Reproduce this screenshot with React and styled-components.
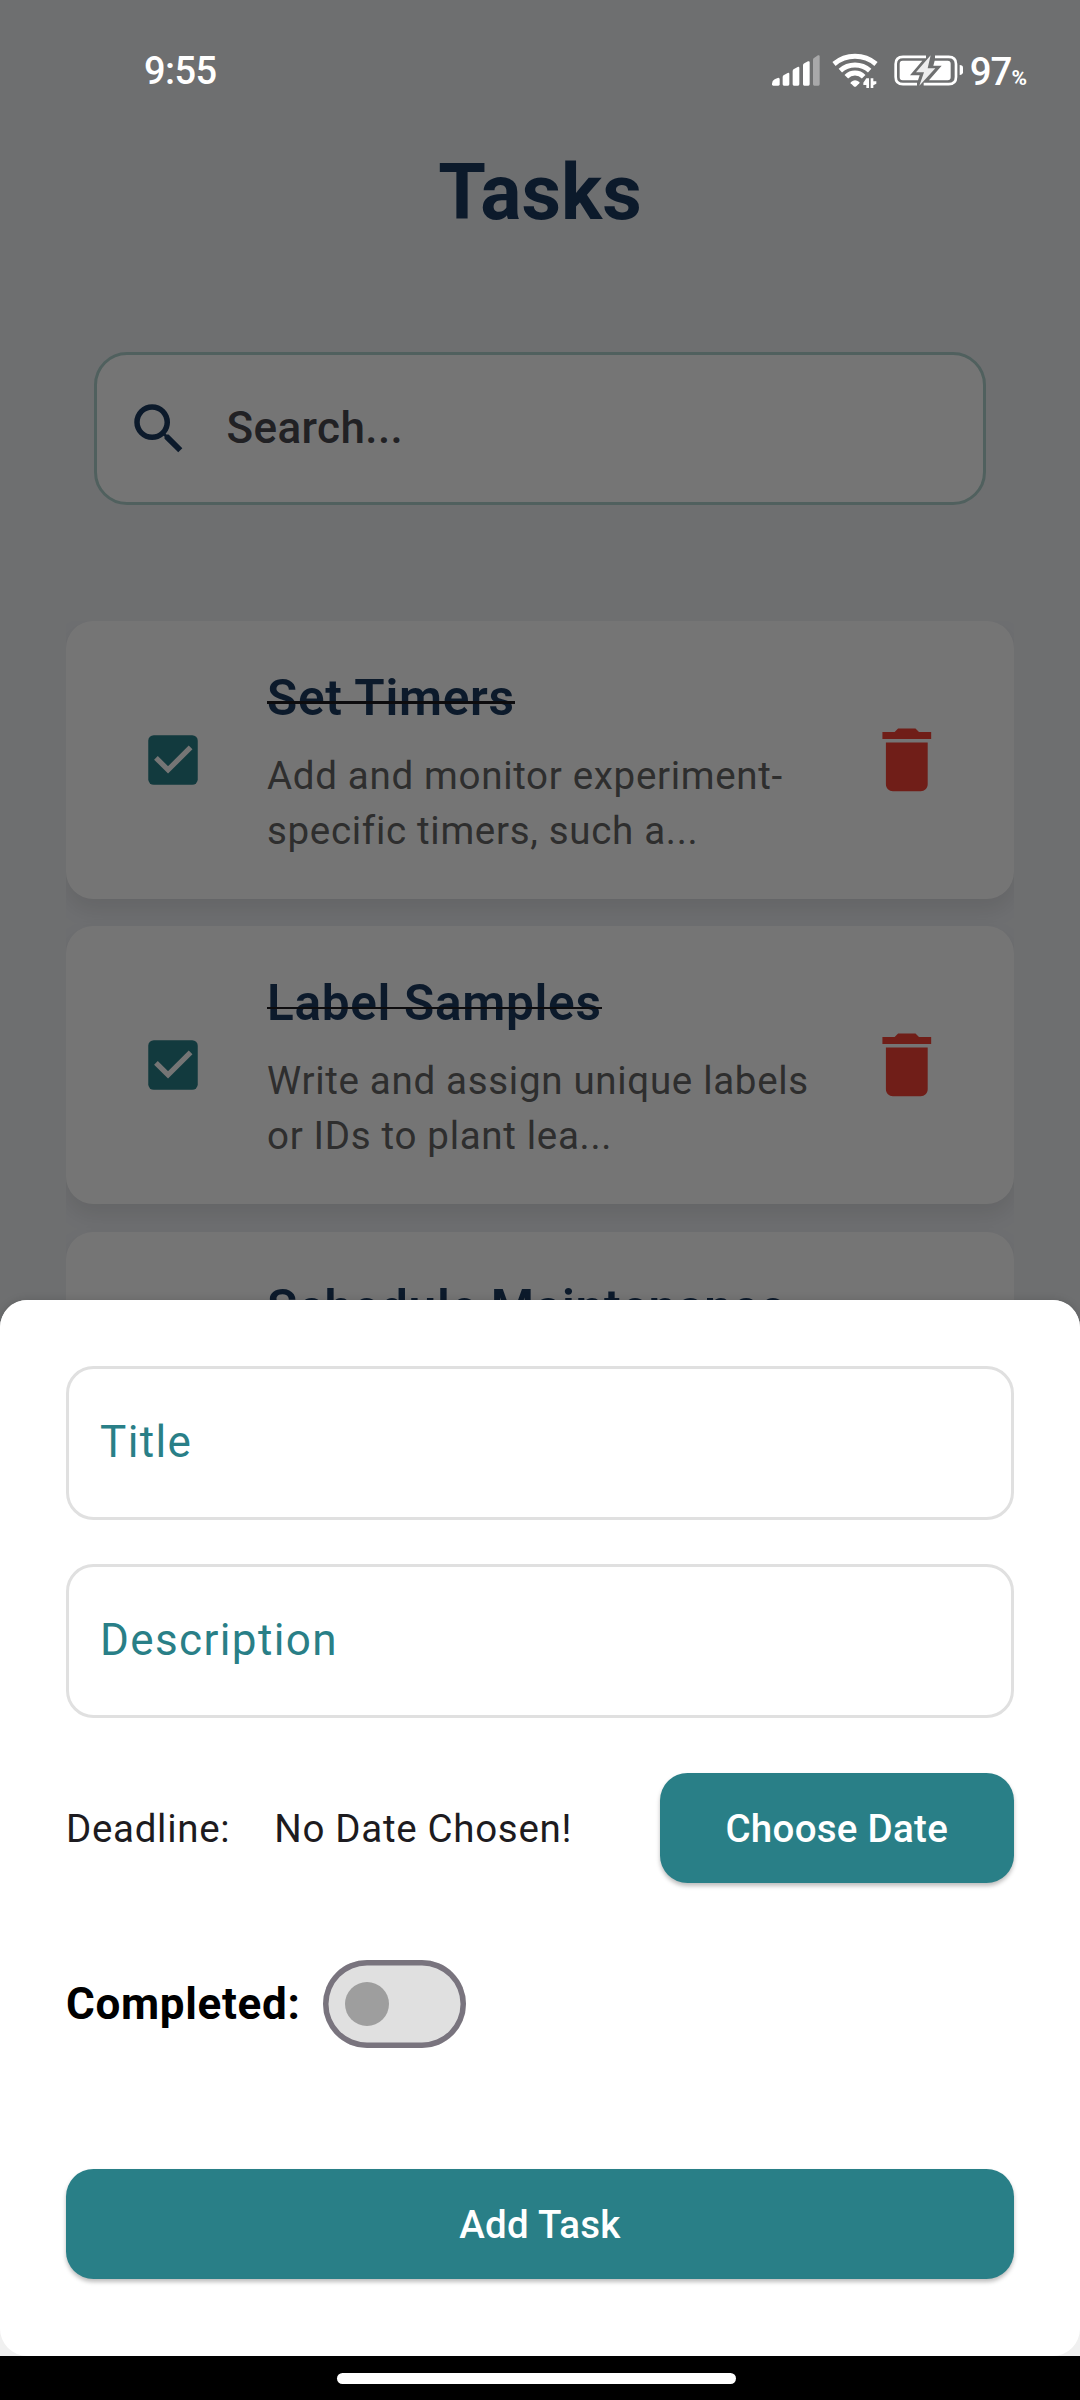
import React from "react";
import styled, { createGlobalStyle } from "styled-components";

const Global = createGlobalStyle`
  *, *::before, *::after { box-sizing: border-box; }
  body { margin: 0; background: #000; font-family: Roboto, "Noto Sans", sans-serif; }
  button, input { font: inherit; }
`;

const Screen = styled.div`
  position: relative;
  width: 1080px;
  height: 2400px;
  overflow: hidden;
  background: #eff1f5;
`;

const Page = styled.main`
  display: flex;
  flex-direction: column;
  height: 2356px;
  padding: 142.5px 66px 0;
  overflow: hidden;
`;

const Heading = styled.h1`
  margin: 0;
  height: 100px;
  line-height: 100px;
  font-size: 77px;
  font-weight: 700;
  text-align: center;
  color: #1b3a5f;
`;

const SearchBox = styled.div`
  display: flex;
  align-items: center;
  gap: 34px;
  height: 153px;
  margin: 109.5px 28px 0;
  padding-left: 29.4px;
  border: 3px solid #aed1cc;
  border-radius: 33px;
  background: #fff;
  color: #1b3a5f;
`;

const Placeholder = styled.span`
  padding-bottom: 2px;
  font-size: 44px;
  font-weight: 500;
  line-height: 66px;
  letter-spacing: 0.41px;
  color: #49484f;
`;

const TaskList = styled.ul`
  display: flex;
  flex-direction: column;
  gap: 27.5px;
  height: 1735px;
  margin: 116px 0 0;
  padding: 0;
  list-style: none;
  overflow: hidden;
`;

const Card = styled.li`
  display: flex;
  align-items: center;
  flex: none;
  height: 277.75px;
  padding: 0 65px 0 74px;
  border-radius: 27.5px;
  background: #fff;
  box-shadow: 0 11px 22px rgba(0, 0, 0, 0.09);
`;

const CardBody = styled.div`
  flex: 1;
  margin-left: 61px;
  padding-top: 6px;
`;

const CardTitle = styled.h2`
  position: relative;
  width: max-content;
  margin: 0 0 20px;
  font-size: 49.5px;
  font-weight: 600;
  line-height: 60px;
  letter-spacing: 0.69px;
  color: #1b3a5f;
  white-space: nowrap;

  &::after {
    content: "";
    position: absolute;
    inset: 33.5px 0 auto;
    height: 2.5px;
    background: #1d1b20;
  }
`;

const CardText = styled.p`
  margin: 0;
  font-size: 38.5px;
  line-height: 55px;
  letter-spacing: 0.69px;
  color: #646464;
  white-space: pre-line;
`;

const Scrim = styled.div`
  position: absolute;
  inset: 0 0 44px;
  background: rgba(0, 0, 0, 0.54);
`;

const StatusBar = styled.header`
  position: absolute;
  inset: 0 0 auto;
  display: flex;
  align-items: flex-start;
  justify-content: space-between;
  padding: 49px 53px 0 144px;
  color: #fff;
`;

const Clock = styled.time`
  font-size: 38px;
  font-weight: 500;
  line-height: 45px;
  letter-spacing: -0.6px;
`;

const StatusIcons = styled.div`
  display: flex;
  align-items: flex-start;
`;

const Glyph = styled.svg`
  display: block;
  flex: none;
  margin-top: ${(p) => p.$drop || 0}px;
  margin-right: ${(p) => p.$gap || 0}px;
  fill: currentColor;
`;

const Battery = styled.span`
  display: flex;
  align-items: baseline;
  font-size: 38.5px;
  font-weight: 500;
  line-height: 45px;
  letter-spacing: -1px;
`;

const Percent = styled.span`
  font-size: 21px;
  font-weight: 700;
  letter-spacing: 0;
`;

const Sheet = styled.section`
  position: absolute;
  inset: 1300px 0 44px;
  background: #f0f0f0;
  border-radius: 27.5px 27.5px 0 0;
  box-shadow: 0 0 8px rgba(0, 0, 0, 0.15);
`;

const Form = styled.form`
  display: flex;
  flex-direction: column;
  height: 1056px;
  padding: 66px 66px 77px;
  border-radius: 27.5px;
  background: #fff;
`;

const Field = styled.label`
  display: flex;
  align-items: center;
  height: 154px;
  margin-bottom: 44px;
  padding: 0 0 3px 31px;
  border: 3px solid #e0e0e0;
  border-radius: 27.5px;
  font-size: 44px;
  letter-spacing: 1.375px;
  color: #297f87;
`;

const DateRow = styled.div`
  display: flex;
  align-items: center;
  height: 110px;
  margin-top: 11px;
  font-size: 38.5px;
  letter-spacing: 0.69px;
  color: #1d1b20;
`;

const DateValue = styled.span`
  flex: 1;
  margin-left: 44px;
`;

const Button = styled.button`
  display: flex;
  align-items: center;
  justify-content: center;
  width: ${(p) => (p.$wide ? "100%" : "354.5px")};
  height: 110px;
  padding: 0;
  border: 0;
  border-radius: 27.5px;
  background: #297f87;
  box-shadow: 0 3px 4px rgba(0, 0, 0, 0.26);
  font-size: 38.5px;
  font-weight: 500;
  letter-spacing: 0.275px;
  color: #fff;
`;

const SwitchRow = styled.div`
  display: flex;
  align-items: center;
  gap: 22px;
  height: 132px;
  margin: 55px 0 99px;
  font-size: 44px;
  font-weight: 700;
  letter-spacing: 0.69px;
  color: #000;
`;

const Track = styled.span`
  display: flex;
  align-items: center;
  width: 143px;
  height: 88px;
  padding-left: 22px;
  border-radius: 44px;
  background: #e0e0e0;
  box-shadow: inset 0 0 0 5.5px #79747e;
`;

const Thumb = styled.span`
  width: 44px;
  height: 44px;
  border-radius: 50%;
  background: #9e9e9e;
`;

const NavBar = styled.footer`
  display: flex;
  justify-content: center;
  height: 44px;
  padding: 17px 7px 0 0;
  background: #000;
`;

const Handle = styled.span`
  width: 399px;
  height: 11px;
  border-radius: 6px;
  background: #fff;
`;

const tasks = [
  { title: "Set Timers", text: "Add and monitor experiment-\nspecific timers, such a..." },
  { title: "Label Samples", text: "Write and assign unique labels\nor IDs to plant lea..." },
  { title: "Schedule Maintenance", text: "Plan regular upkeep for\nlab equipment..." },
];

const SignalIcon = () => (
  <Glyph width="50" height="32" viewBox="0 0 150 96" $gap={11.7} $drop={5}>
    <path d="M3 89q0-9 8-13l9-4q6-2 6 4v15q0 4-4 4H7q-4 0-4-4z" />
    <path d="M35 69q0-4 4-6l11-6q5-2 5 3v31q0 4-4 4H39q-4 0-4-4z" />
    <path d="M65 51q0-4 4-6l11-6q5-2 5 3v49q0 4-4 4H69q-4 0-4-4z" />
    <path d="M96 34q0-4 4-6l11-6q5-2 5 3v66q0 4-4 4h-12q-4 0-4-4z" />
    <path opacity="0.4" d="M126 17q0-4 4-6l11-7q5-2 5 3v84q0 4-4 4h-12q-4 0-4-4z" />
  </Glyph>
);

const WifiIcon = () => (
  <Glyph width="47" height="37" viewBox="0 0 141 111" $gap={13.1} $drop={4.3}>
    <g fill="none" stroke="currentColor" strokeWidth="15">
      <path d="M6 33A98 98 0 0 1 132 33" />
      <path d="M25 53A65 65 0 0 1 113 53" />
      <path d="M43 71A36 36 0 0 1 95 71" />
    </g>
    <path d="M57 87q12-10 25 0q2 2 0 4l-9 9q-4 3-8 0l-9-9q-1-2 1-4z" />
    <path d="M103 76h8v29h-8V96h-9v-7zM116 105V76h8v9h9v7l-9 5v8z" />
  </Glyph>
);

const BatteryIcon = () => (
  <Glyph width="70" height="34" viewBox="0 0 210 102" $gap={7.2} $drop={4.5}>
    <path fill="none" stroke="currentColor" strokeWidth="8" d="M99 8.5H30Q8 8.5 8 30v39q0 21.500 22 21.500H72M126 8.500h41q22 0 22 21.500v39q0 21.500-22 21.500H92" />
    <path d="M88 20H29q-9 0-9 9v41q0 9 9 9h46l5-15H51zM125 20l-4 15h25l-38 44h56q9 0 9-9V29q0-9-9-9z" />
    <path opacity="0.88" d="M113 4L69 55h24L79 95 127 43h-23z" />
    <path d="M200 33q10 1 10 8v14q0 7-10 8z" />
  </Glyph>
);

const CheckIcon = () => (
  <Glyph width="66" height="66" viewBox="0 0 24 24">
    <path fill="#297f87" d="M5 3h14a2 2 0 0 1 2 2v14a2 2 0 0 1-2 2H5a2 2 0 0 1-2-2V5a2 2 0 0 1 2-2z" />
    <path fill="none" stroke="#fff" strokeWidth="1.9" d="M5.8 11.2l4.4 4.4 8.2-8.2" />
  </Glyph>
);

const DeleteIcon = () => (
  <Glyph width="83.6" height="83.6" viewBox="0 0 24 24" color="#f44336">
    <path d="M6 19c0 1.1.9 2 2 2h8c1.1 0 2-.9 2-2V7H6v12zM19 4h-3.5l-1-1h-5l-1 1H5v2h14V4z" />
  </Glyph>
);

const SearchIcon = () => (
  <Glyph width="66" height="66" viewBox="0 0 24 24">
    <path d="M15.5 14h-.79l-.28-.27A6.471 6.471 0 0 0 16 9.5 6.5 6.5 0 1 0 9.5 16c1.61 0 3.09-.59 4.23-1.57l.27.28v.79l5 4.99L20.49 19l-4.99-5zm-6 0C7.01 14 5 11.99 5 9.5S7.01 5 9.5 5 14 7.01 14 9.5 11.99 14 9.5 14z" />
  </Glyph>
);

export default function App() {
  return (
    <Screen>
      <Global />
      <Page>
        <Heading>Tasks</Heading>
        <SearchBox>
          <SearchIcon />
          <Placeholder>Search...</Placeholder>
        </SearchBox>
        <TaskList>
          {tasks.map((task) => (
            <Card key={task.title}>
              <CheckIcon />
              <CardBody>
                <CardTitle>{task.title}</CardTitle>
                <CardText>{task.text}</CardText>
              </CardBody>
              <DeleteIcon />
            </Card>
          ))}
        </TaskList>
      </Page>
      <Scrim />
      <StatusBar>
        <Clock>9:55</Clock>
        <StatusIcons>
          <SignalIcon />
          <WifiIcon />
          <BatteryIcon />
          <Battery>
            97<Percent>%</Percent>
          </Battery>
        </StatusIcons>
      </StatusBar>
      <Sheet>
        <Form>
          <Field>Title</Field>
          <Field>Description</Field>
          <DateRow>
            <span>Deadline:</span>
            <DateValue>No Date Chosen!</DateValue>
            <Button type="button">Choose Date</Button>
          </DateRow>
          <SwitchRow>
            <span>Completed:</span>
            <Track role="switch" aria-checked="false">
              <Thumb />
            </Track>
          </SwitchRow>
          <Button type="button" $wide>
            Add Task
          </Button>
        </Form>
      </Sheet>
      <NavBar>
        <Handle />
      </NavBar>
    </Screen>
  );
}
